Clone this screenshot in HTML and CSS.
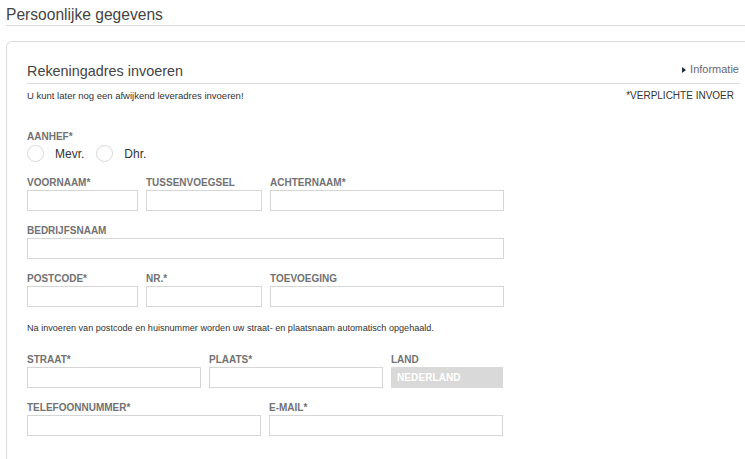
FILE: index.html
```html
<!DOCTYPE html>
<html lang="nl">
<head>
<meta charset="utf-8">
<title>Persoonlijke gegevens</title>
<link rel="stylesheet" href="styles.css">
</head>
<body>
<div class="page">
  <h1 class="page-title">Persoonlijke gegevens</h1>
  <section class="panel">
    <div class="panel-head">
      <h2 class="panel-title">Rekeningadres invoeren</h2>
      <a class="info-link"><span class="info-arrow"></span>Informatie</a>
    </div>
    <div class="notice-row">
      <p class="notice">U kunt later nog een afwijkend leveradres invoeren!</p>
      <p class="required">*VERPLICHTE INVOER</p>
    </div>

    <div class="salutation">
      <div class="label">AANHEF*</div>
      <div class="radios">
        <label class="radio"><span class="radio-dot"></span><span class="radio-text">Mevr.</span></label>
        <label class="radio"><span class="radio-dot"></span><span class="radio-text">Dhr.</span></label>
      </div>
    </div>

    <div class="row">
      <div class="field w111"><div class="label">VOORNAAM*</div><div class="input"></div></div>
      <div class="field w116"><div class="label">TUSSENVOEGSEL</div><div class="input"></div></div>
      <div class="field w234"><div class="label">ACHTERNAAM*</div><div class="input"></div></div>
    </div>

    <div class="row">
      <div class="field w477"><div class="label">BEDRIJFSNAAM</div><div class="input"></div></div>
    </div>

    <div class="row">
      <div class="field w111"><div class="label">POSTCODE*</div><div class="input"></div></div>
      <div class="field w116"><div class="label">NR.*</div><div class="input"></div></div>
      <div class="field w234"><div class="label">TOEVOEGING</div><div class="input"></div></div>
    </div>

    <p class="hint">Na invoeren van postcode en huisnummer worden uw straat- en plaatsnaam automatisch opgehaald.</p>

    <div class="row">
      <div class="field w174"><div class="label">STRAAT*</div><div class="input"></div></div>
      <div class="field w174"><div class="label">PLAATS*</div><div class="input"></div></div>
      <div class="field w112"><div class="label">LAND</div><div class="input input-disabled">NEDERLAND</div></div>
    </div>

    <div class="row">
      <div class="field w234"><div class="label">TELEFOONNUMMER*</div><div class="input"></div></div>
      <div class="field w234"><div class="label">E-MAIL*</div><div class="input"></div></div>
    </div>
  </section>
</div>
</body>
</html>
```

FILE: styles.css
```css
html, body {
  margin: 0;
  padding: 0;
  background: #fff;
}

body {
  font-family: "Liberation Sans", Arial, sans-serif;
  color: #333;
  height: 100vh;
  overflow: hidden;
}

.page {
  padding-left: 6px;
}

.page-title {
  margin: 0;
  padding-top: 4px;
  font-size: 15.6px;
  line-height: 21px;
  font-weight: normal;
  color: #444;
  border-bottom: 1px solid #dcdcdc;
}

.panel {
  box-sizing: border-box;
  min-height: calc(100vh - 41px);
  margin-top: 15px;
  border-top: 1px solid #dcdcdc;
  border-left: 1px solid #dcdcdc;
  border-top-left-radius: 6px;
  padding: 20px 5px 0 20px;
}

.panel-head {
  display: flex;
  justify-content: space-between;
  align-items: flex-end;
  border-bottom: 1px solid #dcdcdc;
  padding-bottom: 3px;
}

.panel-title {
  margin: 0;
  font-size: 14.4px;
  line-height: 18px;
  font-weight: normal;
  color: #444;
}

.info-link {
  display: flex;
  align-items: center;
  font-size: 11px;
  line-height: 13px;
  color: #676775;
  margin-right: 1px;
  margin-bottom: 4px;
}

.info-arrow {
  width: 0;
  height: 0;
  border-top: 3px solid transparent;
  border-bottom: 3px solid transparent;
  border-left: 4px solid #1c2a44;
  margin-right: 4px;
}

.notice-row {
  display: flex;
  justify-content: space-between;
  align-items: flex-end;
  margin-top: 6px;
}

.notice, .required {
  margin: 0;
  font-size: 10px;
  line-height: 12px;
}

.notice {
  font-size: 9.5px;
  color: #333;
}

.required {
  color: #333;
  margin-right: 6px;
}

.salutation {
  margin-top: 29px;
}

.label {
  font-size: 10px;
  line-height: 12px;
  font-weight: bold;
  color: #727272;
  margin-bottom: 1px;
  white-space: nowrap;
}

.radios {
  display: flex;
  gap: 12px;
  margin-top: 2px;
}

.radio {
  display: flex;
  align-items: center;
  gap: 11px;
}

.radio-dot {
  width: 15px;
  height: 15px;
  border: 1px solid #d8d8d8;
  border-radius: 50%;
  background: #fff;
}

.radio-text {
  font-size: 12px;
  line-height: 14px;
  color: #333;
}

.row {
  display: flex;
  gap: 8px;
  margin-top: 14px;
}

.salutation + .row {
  margin-top: 15px;
}

.field {
  display: flex;
  flex-direction: column;
}

.w111 { width: 111px; }
.w112 { width: 112px; }
.w116 { width: 116px; }
.w174 { width: 174px; }
.w234 { width: 234px; }
.w477 { width: 477px; }

.input {
  box-sizing: border-box;
  height: 21px;
  border: 1px solid #d6d6d6;
  background: #fff;
}

.input-disabled {
  border-color: #d9d9d9;
  background: #d9d9d9;
  color: #fff;
  font-size: 10px;
  font-weight: bold;
  line-height: 19px;
  padding-left: 5px;
  letter-spacing: 0.1px;
}

.hint {
  margin: 15px 0 20px;
  font-size: 9.1px;
  line-height: 12px;
  color: #333;
}

.hint + .row {
  margin-top: 0;
}
```
